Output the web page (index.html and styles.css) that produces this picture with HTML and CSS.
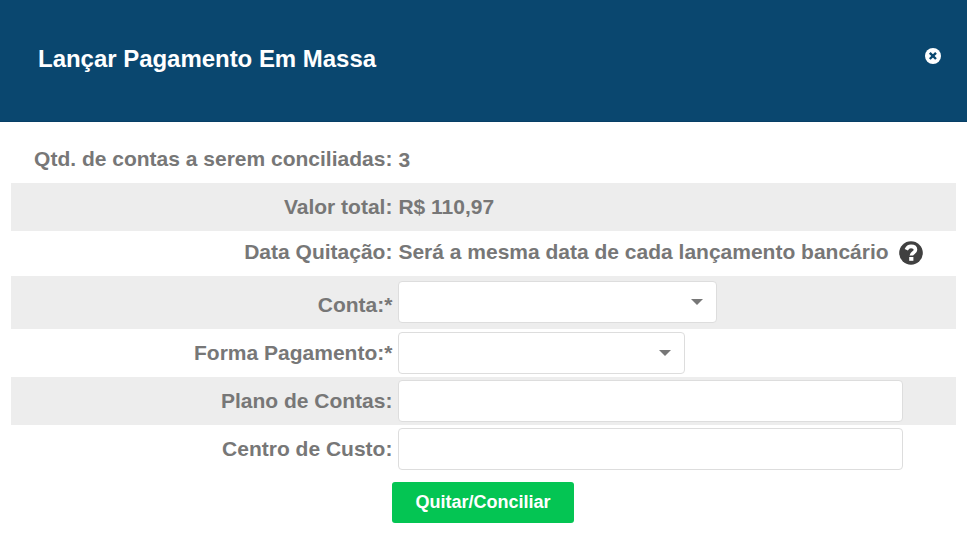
FILE: index.html
```html
<!DOCTYPE html>
<html lang="pt-BR">
<head>
<meta charset="utf-8">
<title>Lançar Pagamento Em Massa</title>
<link rel="stylesheet" href="styles.css">
</head>
<body>
<header class="header">
  <h1 class="title">Lançar Pagamento Em Massa</h1>
  <button class="close" aria-label="Fechar">
    <svg viewBox="0 0 16 16" width="16" height="16"><circle cx="8" cy="8" r="8" fill="#fff"/><path d="M4.8 4.8l6.2 6.2M11 4.8l-6.2 6.2" stroke="#0a476f" stroke-width="2.4"/></svg>
  </button>
</header>
<main class="form">
  <div class="row"><span class="label">Qtd. de contas a serem conciliadas:</span><span class="value count">3</span></div>
  <div class="row"><span class="label">Valor total:</span><span class="value">R$ 110,97</span></div>
  <div class="row row-date"><span class="label">Data Quitação:</span><span class="value">Será a mesma data de cada lançamento bancário</span>
    <svg class="help" viewBox="0 0 24 24" width="24" height="24"><circle cx="12" cy="12" r="11.8" fill="#404040"/><path d="M7.3 8.8C8.3 6.6 9.7 5.4 12 5.4c2.7 0 4.5 1.3 4.5 3.4 0 3-4.1 2.8-4.1 5.8" fill="none" stroke="#fff" stroke-width="3.6"/><rect x="10.2" y="16" width="4.2" height="3.8" fill="#fff"/></svg>
  </div>
  <div class="row row-account"><span class="label">Conta:*</span><div class="field select account"></div></div>
  <div class="row"><span class="label">Forma Pagamento:*</span><div class="field select method"></div></div>
  <div class="row"><span class="label">Plano de Contas:</span><input class="field" aria-label="Plano de Contas"></div>
  <div class="row"><span class="label">Centro de Custo:</span><input class="field" aria-label="Centro de Custo"></div>
  <button class="submit">Quitar/Conciliar</button>
</main>
</body>
</html>
```
FILE: styles.css
```css
* { box-sizing: border-box; }
body {
  margin: 0;
  height: 543px;
  background: #fff;
  color: #777;
  font: bold 21px/24px "Liberation Sans", Arial, sans-serif;
  overflow: hidden;
}
.header {
  display: flex;
  align-items: flex-start;
  justify-content: space-between;
  height: 122px;
  padding: 47px 26px 0 38px;
  background: #0a476f;
  border-bottom: 1px solid #073f66;
  color: #fff;
}
.title { margin: 0; font-size: 24px; line-height: 24px; letter-spacing: -0.03px; }
.close { display: flex; margin-top: 1px; padding: 0; border: 0; background: none; }
.form { padding: 13px 11px 0; }
.row { display: flex; align-items: center; height: 48px; }
.row:nth-child(even) { background: #ededed; }
.row-date { height: 45px; }
.row-account { height: 53px; }
.label { width: 387px; padding-right: 5.6px; text-align: right; white-space: nowrap; }
.value { padding-left: 0.4px; white-space: nowrap; }
.count { margin-top: 2px; }
.row-date .label, .row-date .value { margin-top: -3px; }
.row-account .label { margin-top: 5px; }
.help { margin: -1px 0 0 10.6px; }
.field {
  width: 505px;
  height: 42px;
  padding: 0 10px;
  border: 1px solid #ddd;
  border-radius: 4px;
  background: #fff;
}
.select { display: flex; align-items: center; justify-content: flex-end; padding-right: 13px; }
.select::after {
  content: "";
  border: solid transparent;
  border-width: 6px 6px 0;
  border-top-color: #777;
}
.account { width: 319px; margin-top: -1px; }
.method { width: 287px; }
.submit {
  display: block;
  width: 182px;
  height: 41px;
  margin: 9px 0 0 381px;
  padding: 0 0 2px;
  border: 0;
  border-radius: 3px;
  background: #04c553;
  color: #fff;
  font: bold 18px/38px "Liberation Sans", Arial, sans-serif;
}
```
